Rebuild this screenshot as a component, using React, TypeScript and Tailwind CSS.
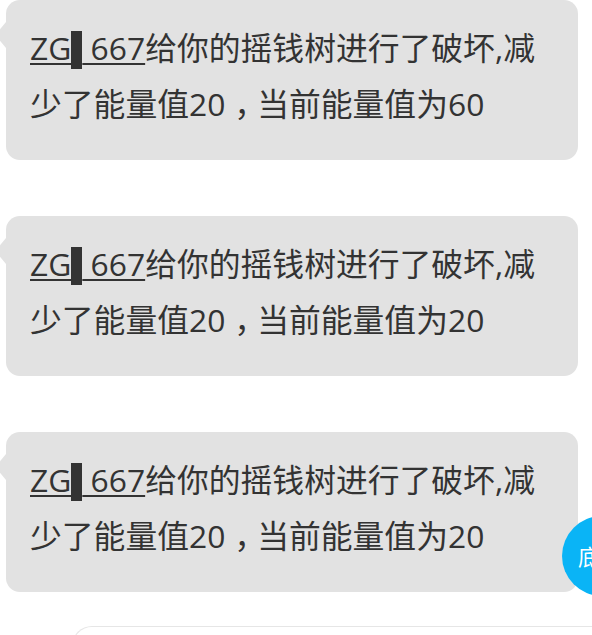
import React from "react";

const messages = [
  { id: 1, value: 60 },
  { id: 2, value: 20 },
  { id: 3, value: 20 },
];

function Bubble({ value }: { value: number }) {
  return (
    <div className="relative ml-[6px] w-[572px] h-[160px] rounded-[14px] bg-[#e2e2e2] pl-[24px] pt-[20px] text-[31.8px] leading-[56px] text-[#333333]">
      {/* little tail on the left */}
      <div className="absolute left-[-6px] top-[22px] w-[6px] h-[26px] bg-[#e2e2e2] [clip-path:polygon(100%_0,0_28%,0_72%,100%_100%)]" />
      <div className="whitespace-nowrap">
        <span className="underline decoration-[2px] underline-offset-[3px]">
          ZG
          <span className="inline-block w-[11px] h-[38px] bg-[#333333] align-[-9px]" /> 667
        </span>
        给你的摇钱树进行了破坏,减
      </div>
      <div className="whitespace-nowrap">
        少了能量值20<span className="pl-[9px] tracking-[-9px]">，</span>当前能量值为{value}
      </div>
    </div>
  );
}

export default function App() {
  return (
    <div
      className="relative h-[635px] w-[592px] overflow-hidden bg-white"
      style={{ fontFamily: '"Open Sans", "Noto Sans CJK SC", sans-serif' }}
    >
      <div className="flex flex-col gap-[56px]">
        {messages.map((m) => (
          <Bubble key={m.id} value={m.value} />
        ))}
      </div>

      {/* next item peeking from below */}
      <div className="ml-[72px] mt-[34px] h-[40px] rounded-tl-[20px] border-l border-t border-[#e6e6e6]" />

      {/* floating "to bottom" button */}
      <div className="absolute left-[562px] top-[516px] flex h-[80px] w-[80px] items-center rounded-full bg-[#0ab4f6] pl-[16px] text-[22px] text-white">
        底
      </div>
    </div>
  );
}
